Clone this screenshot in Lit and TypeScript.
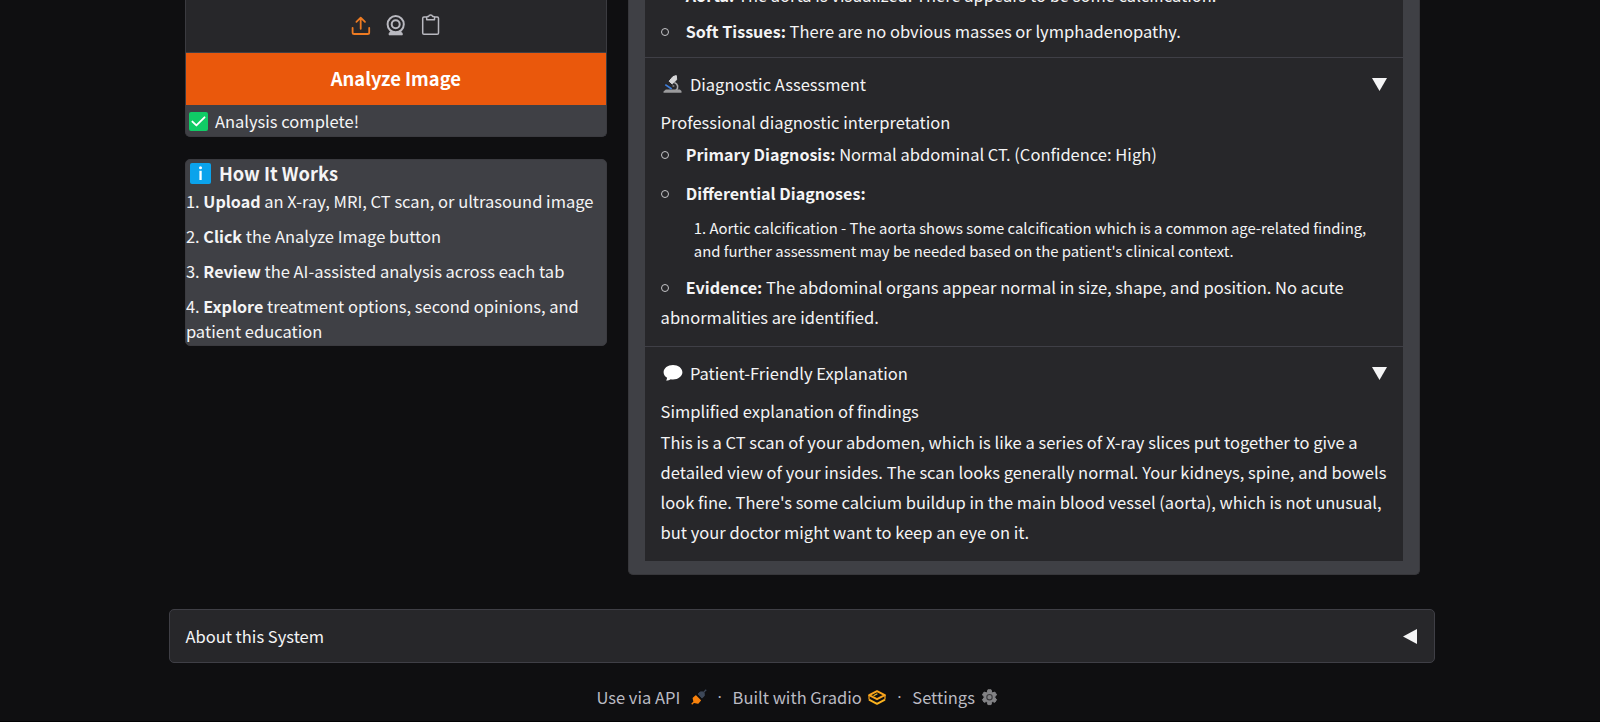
import { LitElement, html, css, svg } from "lit";
import { customElement } from "lit/decorators.js";

const uploadIcon = svg`<svg class="tool" width="21" height="22" viewBox="0 0 21 22" fill="none" stroke="#ee7b22" stroke-width="1.8" stroke-linecap="round" stroke-linejoin="round">
  <path d="M10.7 14.800V3.800M6.400 7.800 10.700 3.600 15 7.800"/><path d="M2.600 13.800v4.600a1.600 1.600 0 0 0 1.600 1.600h13.400a1.600 1.600 0 0 0 1.600-1.600v-4.600"/></svg>`;
const cameraIcon = svg`<svg class="tool" width="21" height="22" viewBox="0 0 21 22" fill="none" stroke="#b9b9c0" stroke-width="2">
  <circle cx="10.700" cy="10.200" r="8.100"/><circle cx="10.700" cy="10.200" r="4"/><path d="M5.600 17.200 4 19.400V21h13.400v-1.600L15.800 17.200 10.700 18.400z" fill="#b9b9c0" stroke-width="0.600"/></svg>`;
const pasteIcon = svg`<svg class="tool" width="21" height="22" viewBox="0 0 21 22" fill="none" stroke="#b9b9c0" stroke-width="1.500" stroke-linejoin="round">
  <path d="M6.700 3H4A1.300 1.300 0 0 0 2.700 4.300v14.600a1.300 1.300 0 0 0 1.300 1.300h13.200a1.300 1.300 0 0 0 1.300-1.300V4.300A1.300 1.300 0 0 0 17.200 3h-2.700"/><path d="M6.700 5.700V3.400a.8.8 0 0 1 .8-.8h1a2.200 2.200 0 0 1 4.200 0h1a.8.8 0 0 1 .8.8v2.300z"/></svg>`;
const checkIcon = svg`<svg class="glyph" width="19" height="19" viewBox="0 0 19 19"><rect width="19" height="19" rx="2" fill="#10cc66"/><path d="M3.400 9.600 7.400 13.400 15.500 5.300" fill="none" stroke="#fff" stroke-width="1.900" stroke-linecap="round" stroke-linejoin="round"/></svg>`;
const infoIcon = svg`<svg class="glyph" width="21" height="21" viewBox="0 0 21 21"><rect width="21" height="21" rx="2" fill="#0ba3ec"/><rect x="9.400" y="7.800" width="2.300" height="9.200" fill="#fff"/><circle cx="10.500" cy="4.700" r="1.500" fill="#fff"/></svg>`;
const microscopeIcon = svg`<svg class="glyph" width="19" height="19" viewBox="0 0 19 19"><path d="M11.400 7.500c3.600 1.400 4.600 5.200 1.400 8" fill="none" stroke="#a9a9ab" stroke-width="1.600"/><path d="M.5 16.400 2.800 14.500h14L18.500 16v1.800H.5z" fill="#9b9b9d"/><path d="M6.100 6.200 10 1.600 13.300.600 13.700 4.700 9.200 9z" fill="#d6d6d8" stroke="#d6d6d8" stroke-linejoin="round"/><path d="M2.300 9.600 8.700 14" stroke="#3f7fdc" stroke-width="1.700"/><circle cx="10.400" cy="11" r="1.100" fill="#77777b"/></svg>`;
const speechIcon = svg`<svg class="glyph" width="20" height="18" viewBox="0 0 20 18"><path d="M10 1C4.800 1 .600 4.200.600 8.200c0 2.400 1.400 4.300 3.500 5.600-.1 1.100-.5 2-1 2.800 1.900-.1 3.500-.6 4.700-1.400.7.1 1.400.2 2.200.2 5.200 0 9.400-3.200 9.400-7.200S15.200 1 10 1z" fill="#fff"/></svg>`;
const arrowDown = svg`<svg class="arrow" width="15" height="13" viewBox="0 0 15 13"><path d="M0 0h15L7.500 13z" fill="#f4f4f5"/></svg>`;
const arrowLeft = svg`<svg class="arrow" width="14" height="15" viewBox="0 0 14 15"><path d="M14 0v15L0 7.500z" fill="#f4f4f5"/></svg>`;
const plugIcon = svg`<svg class="fi plug" width="16" height="17" viewBox="0 0 16 17"><path d="M.700 15.300 2.900 13.100M3.200 13.200 2.300 9.200 4.800 6.900 9.300 11.400 7 14z" fill="#f9820c" stroke="#f9820c" stroke-width="1.400" stroke-linejoin="round"/><path d="M7.200 5 9.300 2.900l3 .1.800.8.200 3-2.200 2.300z" fill="#3d4859" stroke="#3d4859" stroke-linejoin="round"/><path d="m12.600 3.400 2.600-2.600" stroke="#3d4859" stroke-width="1.300"/></svg>`;
const gradioIcon = svg`<svg class="fi" width="18" height="15" viewBox="0 0 18 15" fill="none" stroke-linejoin="round"><path d="M1.200 5.200 9 1.200l7.800 4L9 9.200z" stroke="#f9a41c" stroke-width="2"/><path d="M5.600 5.700 9.400 3.800" stroke="#fcc21f" stroke-width="1.200"/><path d="M1 9.600 9 13.800l8-4.200" stroke="#fbb31f" stroke-width="2"/><path d="M1 5.200v4.400M17 5.200v4.400" stroke="#f9a41c" stroke-width="1.200"/></svg>`;
const gearIcon = svg`<svg class="fi" width="17" height="17" viewBox="0 0 17 17"><path d="M6.900.800h3.200l.5 2.300 1.100.7 2.200-.7 1.700 2.800-1.700 1.600v1.400l1.700 1.600-1.700 2.800-2.200-.7-1.100.7-.5 2.300H6.900l-.5-2.300-1.100-.7-2.200.7-1.700-2.800 1.700-1.600V7.500L1.400 5.900l1.700-2.800 2.200.7 1.100-.7z" fill="#828285" stroke="#828285" stroke-linejoin="round"/><circle cx="8.500" cy="8.200" r="2.700" fill="none" stroke="#3a3a3d" stroke-width="1.100"/></svg>`;

@customElement("app-root")
export class AppRoot extends LitElement {
  static styles = css`
    :host { display: block; box-sizing: border-box; height: 722px; overflow: hidden; background: #0f0f11; border-bottom: 1px solid #020203; color: #f4f4f5; font: 400 16.53px/24.8px "Noto Sans CJK SC", "Noto Sans", sans-serif; }
    * { box-sizing: border-box; }
    p { margin: 0; }
    b { font-weight: 700; font-size: 16.1px; line-height: 1; }
    svg { display: block; flex: none; }
    .page { width: 1266px; margin: 0 0 0 169.400px; }
    .columns { display: flex; align-items: flex-start; justify-content: space-between; height: 609px; padding: 0 15.800px 0 15.500px; }
    .side { width: 422px; display: flex; flex-direction: column; gap: 21.600px; }
    .card { background: #3f4045; border: 1px solid #3b3b40; border-radius: 5px; overflow: hidden; }
    .upload { border-top: 0; border-radius: 0 0 5px 5px; height: 137px; }
    .sources { height: 53px; background: #27272a; border-bottom: 1px solid #3f3f46; display: flex; justify-content: center; gap: 14px; padding-top: 14px; }
    .analyze { display: flex; width: 100%; height: 52px; border: 0; padding: 0; justify-content: center; background: #ea580c; color: #fff; font: 700 18.400px/50.500px "Noto Sans CJK SC", sans-serif; }
    .status { display: flex; gap: 7px; padding: 4px 0 0 3px; }
    .status .glyph { margin-top: 3px; }
    .how { height: 187.100px; }
    .how h3 { margin: 0; display: flex; gap: 8px; font-size: 18.300px; line-height: 26.900px; height: 28px; padding-left: 4px; }
    .how h3 .glyph { margin-top: 3.200px; }
    .how p { line-height: 25.300px; margin: 0 0 9.800px; }
    .how h3 + p { margin-top: 1px; }
    .how p:last-child { line-height: 25px; }
    .result { width: 791.500px; height: 575px; background: #3f4045; border: 1px solid #37373b; border-top: 0; border-radius: 0 0 5px 5px; padding: 0 16px; overflow: hidden; }
    .doc { height: 561px; background: #27272a; }
    .section { padding: 0 15px 0 15.500px; border-bottom: 1px solid #3f3f46; overflow: hidden; }
    .organs { height: 58px; }
    .organs .item:first-child { margin: -20.200px 0 6.100px; }
    .assess { height: 289px; }
    .explain { height: 214px; border: 0; }
    .summary { display: flex; align-items: center; height: 24.800px; margin: 13.700px 0 13.200px; }
    .explain .summary { margin-top: 13.800px; margin-bottom: 13px; }
    .explain .lead { margin-bottom: 3.700px; }
    .summary .glyph { margin-right: 8px; margin-left: 2.300px; }
    .explain .glyph { margin-right: 7px; }
    .summary .arrow { margin-left: auto; margin-right: 1px; }
    .item { line-height: 30px; margin-bottom: 9.200px; }
    .bullet { display: inline-block; width: 25.200px; }
    .bullet::before { content: ""; display: inline-block; width: 6px; height: 6px; margin-left: .5px; border: 1px solid #c4c4c7; border-radius: 50%; vertical-align: 2px; }
    .lead { margin-bottom: 4.100px; }
    .diff { margin: -1.200px 0 9.400px 33.200px; font-size: 14.870px; line-height: 23.400px; }
    .body { line-height: 30.100px; }
    .about { display: flex; align-items: center; justify-content: space-between; height: 54px; background: #27272a; border: 1px solid #3f3f46; border-radius: 5px; padding: 0 17px 0 15px; }
    .foot { display: flex; align-items: center; height: 25px; margin: 22px 0 0 427px; color: #bbbbc3; }
    .foot .gap { flex: none; width: 26px; text-align: center; font-family: "Open Sans", sans-serif; }
    .fi { margin-left: 6.500px; }
    .plug { margin-left: 10.300px; }
  `;

  render() {
    const dot = html`<span class="bullet"></span>`;
    return html`
      <main class="page">
        <div class="columns">
          <div class="side">
            <section class="card upload">
              <div class="sources">${uploadIcon}${cameraIcon}${pasteIcon}</div>
              <button class="analyze">Analyze Image</button>
              <div class="status">${checkIcon}<span>Analysis complete!</span></div>
            </section>
            <section class="card how">
              <h3>${infoIcon}<span>How It Works</span></h3>
              <p>1. <b>Upload</b> an X-ray, MRI, CT scan, or ultrasound image</p>
              <p>2. <b>Click</b> the Analyze Image button</p>
              <p>3. <b>Review</b> the AI-assisted analysis across each tab</p>
              <p>4. <b>Explore</b> treatment options, second opinions, and patient education</p>
            </section>
          </div>
          <div class="result">
            <div class="doc">
              <section class="section organs">
                <p class="item">${dot}<b>Aorta:</b> The aorta is visualized. There appears to be some calcification.</p>
                <p class="item">${dot}<b>Soft Tissues:</b> There are no obvious masses or lymphadenopathy.</p>
              </section>
              <section class="section assess">
                <div class="summary">${microscopeIcon}<span>Diagnostic Assessment</span>${arrowDown}</div>
                <p class="lead">Professional diagnostic interpretation</p>
                <p class="item">${dot}<b>Primary Diagnosis:</b> Normal abdominal CT. (Confidence: High)</p>
                <p class="item">${dot}<b>Differential Diagnoses:</b></p>
                <p class="diff">1. Aortic calcification - The aorta shows some calcification which is a common age-related finding,<br>and further assessment may be needed based on the patient's clinical context.</p>
                <p class="item">${dot}<b>Evidence:</b> The abdominal organs appear normal in size, shape, and position. No acute<br>abnormalities are identified.</p>
              </section>
              <section class="section explain">
                <div class="summary">${speechIcon}<span>Patient-Friendly Explanation</span>${arrowDown}</div>
                <p class="lead">Simplified explanation of findings</p>
                <p class="body">This is a CT scan of your abdomen, which is like a series of X-ray slices put together to give a<br>detailed view of your insides. The scan looks generally normal. Your kidneys, spine, and bowels<br>look fine. There's some calcium buildup in the main blood vessel (aorta), which is not unusual,<br>but your doctor might want to keep an eye on it.</p>
              </section>
            </div>
          </div>
        </div>
        <div class="about"><span>About this System</span>${arrowLeft}</div>
        <footer class="foot">
          <span>Use via API</span>${plugIcon}<span class="gap">·</span>
          <span>Built with Gradio</span>${gradioIcon}<span class="gap">·</span>
          <span>Settings</span>${gearIcon}
        </footer>
      </main>`;
  }
}
